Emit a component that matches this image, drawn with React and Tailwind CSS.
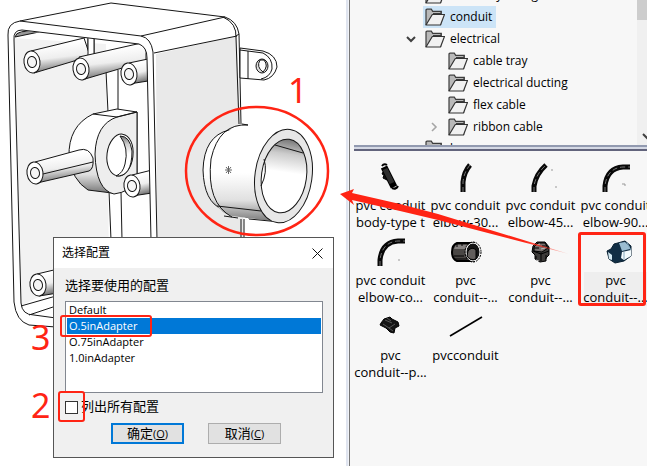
import React from "react";

const ui = "font-['Open_Sans','Noto_Sans_CJK_SC',sans-serif]";

function Folder() {
  return (
    <svg viewBox="0 0 20 18" className="h-[18px] w-5 shrink-0" fill="none">
      <path d="M1 17V1.5h5.5l1.5 2h8.5V17z" fill="#b9b9b9" />
      <path d="M1 17V2.2Q1 1.2 2 1.2h4.3l1.4 2.1h8.6v2.9M16 3.3v3M8 5.5h8" stroke="#3c3c3c" strokeWidth="1.2" />
      <path d="M1 17 7.3 6.5h12.2L15.5 17z" fill="#f1f1f1" stroke="#333" strokeWidth="1.2" strokeLinejoin="round" />
    </svg>
  );
}

function Chevron({ open }) {
  return (
    <svg viewBox="0 0 10 10" className="h-[10px] w-[10px]" fill="none">
      {open ? (
        <path d="M1 3l4 4 4-4" stroke="#404040" strokeWidth="2" />
      ) : (
        <path d="M3 1l4 4-4 4" stroke="#a6a6a6" strokeWidth="1.6" />
      )}
    </svg>
  );
}

const tree = [
  { name: "assembly fitting", level: 0, arrow: "closed" },
  { name: "conduit", level: 0, selected: true },
  { name: "electrical", level: 0, arrow: "open" },
  { name: "cable tray", level: 1 },
  { name: "electrical ducting", level: 1 },
  { name: "flex cable", level: 1 },
  { name: "ribbon cable", level: 1, arrow: "closed" },
  { name: "hvac", level: 0 },
];

function TreeRow({ item }) {
  return (
    <li className={"flex h-[22px] items-center " + (item.level ? "pl-[79px]" : "pl-14")}>
      <span className="flex w-[17px] items-center">
        {item.arrow && <Chevron open={item.arrow === "open"} />}
      </span>
      <button
        type="button"
        className={"flex h-[22px] items-center gap-[5px] pr-1 pl-0.5 " + (item.selected ? "bg-[#cce4f7]" : "")}
      >
        <Folder />
        <span className="leading-[22px]">{item.name}</span>
      </button>
    </li>
  );
}

function Elbow({ d }) {
  return (
    <g fill="none">
      <path d={d} stroke="#080808" strokeWidth="5" />
      <path d={d} stroke="#777" strokeWidth="1" strokeDasharray="5 3" />
    </g>
  );
}

const icons = {
  body: (
    <g>
      <path d="M9 9l-1 2 2 1-1 3 4 2 3-4z" fill="#111" stroke="#000" />
      <path d="M10 4 20 24" stroke="#000" strokeWidth="7" />
      <path d="M11 6 18 20" stroke="#2e2e2e" strokeWidth="5" />
      <path d="M8 3q2-3 5-1M18 25q4 2 6-2" fill="none" stroke="#000" strokeWidth="2" />
    </g>
  ),
  e30: <Elbow d="M14 29V19Q15 9 21 2" />,
  e45: <><Elbow d="M10 29V23Q12 11 22 2" /><path d="M27 7h2M32 23v2" stroke="#999" /></>,
  e90: <><Elbow d="M6 29V23Q8 5 24 4h7" /><path d="M23 21h3v2" stroke="#999" fill="none" /></>,
  elbow: <><Elbow d="M6 28V22Q8 4 24 3h7" /><path d="M24 22h2" stroke="#999" /></>,
  coupling: (
    <g stroke="#000">
      <path d="M8 5h17v18H8Q3 21 3 14T8 5z" fill="#4a4745" strokeWidth="2" />
      <path d="M7 7h13v4H5z" fill="#858180" stroke="none" />
      <ellipse cx="24" cy="14" rx="7" ry="9" fill="#151515" stroke="#fff" />
      <path d="M19 13q4-5 8-1v9q-6 2-9-3z" fill="#625e5c" />
      <path d="M5 18h10M6 21h12M8 5v4M13 5v3" />
      <ellipse cx="24" cy="14" rx="8" ry="10" fill="none" strokeDasharray="2 1" />
    </g>
  ),
  terminal: (
    <g stroke="#000">
      <path d="M9 8l4-4h8l4 5v8l-3 3v3l-6 1-5-3v-4l-3-3z" fill="#3d3b3a" />
      <path d="M10 9l4-4h7l3 5-6 4-8-1z" fill="#77716f" />
      <path d="M9 13l8 3 8-3M17 15v8M12 18v3M22 17v4M10 10h5M18 8h5" fill="none" />
      <path d="M13 7l3-1M17 11l4-1M12 22l3 1" stroke="#bbb" />
    </g>
  ),
  adapter: (
    <g strokeLinejoin="round">
      <path d="M8 13l4-2 3-5 11-3 6 5v10l-7 5-9 2-6-4z" fill="#112e45" stroke="#092032" />
      <path d="M20 5l6-1 5 5v2l-8 2z" fill="#9bbdd2" />
      <path d="M23 14l9-2v6l-7 4-3-2z" fill="#f2fafd" />
      <path d="M9 14l4 3v5l-3-1z" fill="#d5eaf3" />
      <path d="M25 14v7M28 4l2 5 2 3" fill="none" stroke="#84a8bd" />
    </g>
  ),
  pull: (
    <g fill="#141414" stroke="#000">
      <path d="M7 10l3-4 6-2 2 2 6 3 1 4-4 2-1 5-4-1-4-4-6-3z" />
      <path d="M11 7l7 3M9 11l6 4 6-4M15 15l4 3M13 5l4 3" stroke="#555" fill="none" />
    </g>
  ),
  line: <path d="M1 23 33 4" stroke="#000" strokeWidth="1.6" />,
};

const parts = [
  ["body", "pvc conduit", "body-type t"],
  ["e30", "pvc conduit", "elbow-30..."],
  ["e45", "pvc conduit", "elbow-45..."],
  ["e90", "pvc conduit", "elbow-90..."],
  ["elbow", "pvc conduit", "elbow-co..."],
  ["coupling", "pvc", "conduit--..."],
  ["terminal", "pvc", "conduit--..."],
  ["adapter", "pvc", "conduit--..."],
  ["pull", "pvc", "conduit--p..."],
  ["line", "pvcconduit", ""],
];

function Part({ part }) {
  const [icon, first, second] = part;
  const chosen = icon === "adapter";
  return (
    <button type="button" className="relative flex h-[75px] w-[75px] shrink-0 flex-col items-center">
      <svg viewBox="0 0 34 34" className="h-[34px] w-[34px] shrink-0 overflow-visible">{icons[icon]}</svg>
      <span className={"w-16 whitespace-nowrap text-center leading-[17px] " + (chosen ? "bg-[#eeeeee]" : "")}>
        <span className="-mx-2 block">{first}</span>
        <span className="-mx-2 block">{second}</span>
      </span>
      {chosen && <span className="absolute -top-[6px] left-0 h-[74px] w-[68px] rounded-[3px] border-[3px] border-[#ff2414]" />}
    </button>
  );
}

function Library() {
  return (
    <aside className={"flex w-[301px] shrink-0 border-l-2 border-[#dfe4ef] bg-[#f7f7f7] text-black " + ui}>
      <div className="w-[2px] shrink-0 border-r border-[#777] bg-[#f1f3f8]" />
      <div className="min-w-0 flex-1 overflow-hidden">
        <div className="flex h-[145px] overflow-hidden text-[12px]">
          <ul className="-mt-4 flex-1">
            {tree.map((item) => <TreeRow key={item.name} item={item} />)}
          </ul>
          <div className="flex w-[10px] flex-col items-start justify-between overflow-hidden bg-[#f0f0f0] pb-1">
            <span className="h-5 w-full bg-[#cdcdcd]" />
            <span className="pl-[5px]"><Chevron open /></span>
          </div>
        </div>
        <div className="ml-1 h-[6px] border-y-2 border-t-[#929ab0] border-b-[#62647c] bg-[#d5d9e5]" />
        <div className="flex w-[304px] flex-wrap pt-3 pl-[3px] text-[13px]">
          {parts.map((part) => <Part key={part[0]} part={part} />)}
        </div>
      </div>
    </aside>
  );
}

function Boss({ x, y, body, rx = 8, ry = 11 }) {
  return (
    <g>
      <path d={body} fill="url(#tube)" />
      <g transform={`rotate(-8 ${x} ${y})`}>
        <ellipse cx={x} cy={y} rx={rx} ry={ry} fill="#fff" />
        <ellipse cx={x} cy={y} rx="4.5" ry="5.5" fill="#f5f5f5" />
      </g>
    </g>
  );
}

function Model() {
  return (
    <svg viewBox="0 0 346 466" className="block h-[466px] w-[346px]" fill="none" stroke="#151515" strokeWidth="1">
      <defs>
        <linearGradient id="tube" x1="0" y1="0" x2=".2" y2="1">
          <stop offset=".25" stopColor="#fff" /><stop offset=".62" stopColor="#eee" /><stop offset="1" stopColor="#777" />
        </linearGradient>
        <linearGradient id="collar" x1="0" y1="0" x2="0" y2="1">
          <stop offset=".5" stopColor="#fff" /><stop offset=".78" stopColor="#e0e0e0" /><stop offset="1" stopColor="#777" />
        </linearGradient>
        <linearGradient id="bore" x1="0" y1="0" x2="0" y2="1">
          <stop stopColor="#777" /><stop offset=".2" stopColor="#ccc" /><stop offset=".45" stopColor="#fff" />
        </linearGradient>
      </defs>
      <path d="M20 21 111 3 225 17Q237 21 239 34L244 240 157 312 42 326 15 303 8 33Q8 23 20 21Z" fill="#fff" stroke="none" />
      <path d="M156 54 237 36 244 240H157Z" fill="#e9e9e9" stroke="none" />
      <path d="M14 38 106 44 109 260 21 306Z" fill="#f2f2f2" stroke="none" />
      <path d="M15 37Q16 29 39 32Z" fill="#999" />
      <path d="M88 38v17M94 39v16M106 71l2 41M118 70v41M109 191l2 49M121 192l1 48" />
      <Boss x={32} y={62} body="M31 51 84 38 90 56 74 61 34 73Z" />
      <path d="M88 37h6v18l-6 1z" fill="#fff" />
      <Boss x={81} y={69} body="M79 57 146 42V61L85 79Z" />
      <Boss x={129} y={74} body="M129 63 148 59V81L129 84Z" />
      <path d="M93 114 117 109 137 112V174L112 193 88 190Q72 180 69 157 68 126 93 114Z" fill="url(#collar)" />
      <path d="M95 154Q96 124 117 117L137 112V180Q130 192 114 194 96 190 95 154Z" fill="#eee" />
      <path d="m93 114 24 3 20-5" />
      <ellipse cx="120" cy="155" rx="13" ry="21" fill="#fff" transform="rotate(7 120 155)" />
      <path d="M120 136q9 12 5 28-2 9-9 12Q132 177 132 151 130 136 120 136Z" fill="url(#bore)" />
      <Boss x={35} y={173} body="M35 162 79 150Q89 147 93 158 94 169 89 171L37 183Z" />
      <path d="m43 174 50-12" />
      <Boss x={132} y={186} body="M132 175 152 170V193L132 196Z" />
      <path d="M18 22 8 33 15 306Q18 322 29 325L56 327V318L29 315Q22 312 20 301L14 39Q15 30 24 31L139 44Q146 47 147 60L151 240H157L153 51Q151 41 141 36L24 22Z" fill="#fff" stroke="none" />
      <path d="M157 240 153 52Q151 38 141 36L20 21Q7 23 8 35L14 302Q16 321 29 325L56 327M151 240 147 58Q147 47 139 44L22 30Q13 30 14 40L21 303Q22 315 34 315L56 318M20 21 111 3 225 17Q237 21 239 34M141 36 225 17M154 53 237 36" />
      <path d="M223 17Q237 23 236 38L239 124M239 34 241 124M236 36 239 34" />
      <path d="M21 306 56 296M29 315 56 306" />
      <Boss x={38} y={285} body="M37 274 58 269V293L39 296Z" />
      <path d="M240 48 263 51Q277 55 277 67 274 78 264 80L240 78Z" fill="#fff" />
      <path d="M240 50 263 53Q273 58 272 69 270 77 261 79M248 51V79" />
      <ellipse cx="262" cy="66" rx="6" ry="7" fill="#ddd" />
      <path d="M260 60q-4 7 3 12Q269 66 264 60Z" fill="#fff" />
      <path d="M229 130Q204 136 203 170 204 202 222 209L249 218V133Z" fill="url(#collar)" />
      <path d="M242 124 288 130 280 222 232 216Q210 211 210 174 213 133 242 124Z" fill="url(#collar)" stroke="none" />
      <path d="M248 125Q219 123 211 159 206 203 232 217M242 124l6 1M217 206l44 5M224 216l14 2M249 219l31 3" />
      <ellipse cx="283.5" cy="176" rx="28.5" ry="47" fill="#e7e7e7" transform="rotate(8 283.5 176)" />
      <ellipse cx="284" cy="176" rx="22.5" ry="37" fill="url(#bore)" transform="rotate(8 284 176)" />
      <path d="M275 145 303 153M264 159q4 13-3 27M241 219v21M244 219v21" />
      <path d="M225 170h7M228.500 166v8M226 167l5 6M231 167l-5 6" stroke="#666" />
    </svg>
  );
}

function DialogButton({ primary, label, letter }) {
  return (
    <button type="button" className={"h-[21px] w-[73px] bg-[#e1e1e1] text-[13px] leading-[17px] " + (primary ? "border-2 border-[#0078d7]" : "border border-[#adadad]")}>
      {label}<span className="text-[11px]">(<u>{letter}</u>)</span>
    </button>
  );
}

function ConfigDialog() {
  return (
    <section role="dialog" aria-labelledby="dialog-title" className={"absolute top-[237px] left-[53px] h-[221px] w-[281px] border border-[#555] bg-[#f0f0f0] text-[13px] text-black " + ui}>
      <header className="flex h-[30px] items-center justify-between bg-white pr-[10px] pl-2">
        <h1 id="dialog-title" className="text-[12px]">选择配置</h1>
        <button type="button" aria-label="关闭">
          <svg viewBox="0 0 11 11" className="h-[11px] w-[11px]" stroke="#111"><path d="m.5.5 10 10m0-10-10 10" /></svg>
        </button>
      </header>
      <div className="pt-2 pr-[10px] pl-[11px]">
        <label htmlFor="config-list" className="block leading-[18px]">选择要使用的配置</label>
        <select id="config-list" size="5" defaultValue="half" className="mt-[7px] block h-[92px] w-full appearance-none overflow-hidden border border-[#828790] bg-white px-px text-[11px] outline-none">
          <option className="h-4 min-h-4 px-0.5 py-0 leading-4" value="default">Default</option>
          <option className="h-4 min-h-4 bg-[#0078d7] px-0.5 py-0 leading-4 text-white checked:bg-[#0078d7] checked:bg-linear-to-r checked:from-[#0078d7] checked:to-[#0078d7]" value="half">O.5inAdapter</option>
          <option className="h-4 min-h-4 px-0.5 py-0 leading-4" value="three">O.75inAdapter</option>
          <option className="h-4 min-h-4 px-0.5 py-0 leading-4" value="one">1.0inAdapter</option>
        </select>
        <label className="mt-1 flex h-5 items-center gap-[3px]">
          <input type="checkbox" className="h-[13px] w-[13px] appearance-none border border-[#333] bg-white" />
          列出所有配置
        </label>
        <div className="mt-[6px] flex justify-center gap-6 pl-1">
          <DialogButton primary label="确定" letter="O" />
          <DialogButton label="取消" letter="C" />
        </div>
      </div>
    </section>
  );
}

function Annotations() {
  return (
    <div className="pointer-events-none absolute inset-0 overflow-hidden font-['Noto_Sans',sans-serif] text-[34px] leading-[34px] text-[#ff2414]">
      <svg viewBox="0 0 647 466" className="absolute top-0 left-0 h-[466px] w-[647px]" fill="none">
        <defs>
          <linearGradient id="fade" gradientUnits="userSpaceOnUse" x1="340" y1="0" x2="570" y2="0">
            <stop offset=".8" stopColor="#ff2414" /><stop offset="1" stopColor="#ff2414" stopOpacity=".15" />
          </linearGradient>
        </defs>
        <ellipse cx="257" cy="171" rx="71" ry="64" stroke="#ff2414" strokeWidth="2.5" />
        <path d="M340 194 354 189 352 193 400 204 438 214 569 254 438 220 400 211 352 200 354 205Z" fill="url(#fade)" />
      </svg>
      <span className="absolute top-[73px] left-[288px]">1</span>
      <span className="absolute top-[388px] left-[31px]">2</span>
      <span className="absolute top-[320px] left-[31px]">3</span>
      <span className="absolute top-[315px] left-[60px] h-[22px] w-[92px] rounded-[3px] border-2 border-[#ff2414]" />
      <span className="absolute top-[391px] left-[58px] h-[31px] w-[27px] rounded-[3px] border-2 border-[#ff2414]" />
    </div>
  );
}

export default function App() {
  return (
    <main className="relative flex min-h-screen w-full overflow-hidden bg-white">
      <section className="relative min-w-0 flex-1 overflow-hidden">
        <Model />
        <ConfigDialog />
      </section>
      <Library />
      <Annotations />
    </main>
  );
}
